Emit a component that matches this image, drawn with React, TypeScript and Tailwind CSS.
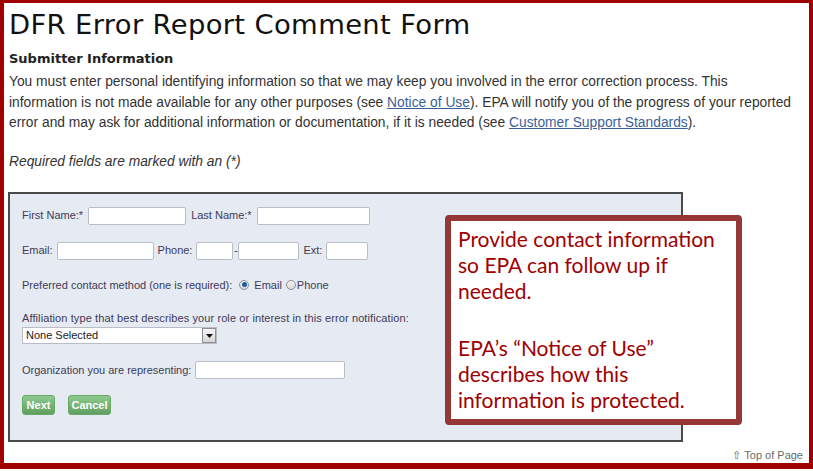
import React from "react";

const labelCls = "text-[11px] text-[#3d3b57]";
const inputCls = "h-[18px] bg-white border border-[#b9bdc6] rounded-[2px]";

const Field: React.FC<{ w: string }> = ({ w }) => (
  <div className={`${inputCls} ${w}`} />
);

const Radio: React.FC<{ checked?: boolean }> = ({ checked }) => (
  <span className="inline-flex w-[10px] h-[10px] rounded-full border border-[#8a8f99] bg-gradient-to-b from-[#f4f4f4] to-[#d8d8d8] items-center justify-center">
    {checked && <span className="w-[5px] h-[5px] rounded-full bg-[#1e5f9e]" />}
  </span>
);

const GreenButton: React.FC<{ label: string; w: string }> = ({ label, w }) => (
  <div
    className={`${w} h-[20px] rounded-[3px] bg-gradient-to-b from-[#8fca8f] to-[#5f9f5f] border border-[#6aa86a] flex items-center justify-center text-white text-[11px] font-bold`}
  >
    {label}
  </div>
);

const App: React.FC = () => {
  return (
    <div className="w-[813px] h-[471px] bg-white overflow-hidden relative font-['DejaVu_Sans',sans-serif]">
      <div className="w-[813px] h-[469px] border-t-[3px] border-l-4 border-r-4 border-b-[6px] border-[#a10000] flex flex-col pl-[5px]">
        <h1 className="text-[27.4px] leading-[32px] text-[#111] mt-[6px] tracking-[0.35px]">
          DFR Error Report Comment Form
        </h1>
        <h2 className="text-[13px] font-bold text-[#222] mt-[9px] leading-[18px]">
          Submitter Information
        </h2>
        <p className="text-[13.8px] leading-[20.5px] text-[#333] mt-[4px] font-['Liberation_Sans',sans-serif]">
          You must enter personal identifying information so that we may keep you involved in the error correction process. This
          <br />
          information is not made available for any other purposes (see{" "}
          <span className="text-[#3b5f9a] underline">Notice of Use</span>). EPA will notify you of the progress of your reported
          <br />
          error and may ask for additional information or documentation, if it is needed (see{" "}
          <span className="text-[#3b5f9a] underline">Customer Support Standards</span>).
        </p>
        <p className="text-[13.8px] italic text-[#333] mt-[18px] leading-[20px] font-['Liberation_Sans',sans-serif]">
          Required fields are marked with an (*)
        </p>
        <div className="ml-[-1px] mt-[20px] w-[675px] h-[251px] border-2 border-[#4a4a4a] bg-[#e6eaf2] pl-[12px] pt-[13px] flex flex-col font-['Liberation_Sans',sans-serif]">
          <div className="flex items-center gap-[5px]">
            <span className={labelCls}>First Name:*</span>
            <Field w="w-[98px]" />
            <span className={labelCls}>Last Name:*</span>
            <Field w="w-[113px]" />
          </div>
          <div className="flex items-center gap-[4px] mt-[17px]">
            <span className={labelCls}>Email:</span>
            <Field w="w-[97px]" />
            <span className={labelCls}>Phone:</span>
            <div className="flex items-center">
              <Field w="w-[37px]" />
              <span className={`${labelCls} w-[5px] text-center`}>-</span>
              <Field w="w-[61px]" />
            </div>
            <span className={labelCls}>Ext:</span>
            <Field w="w-[42px]" />
          </div>
          <div className="flex items-center gap-[4px] mt-[17px]">
            <span className={`${labelCls} mr-[3px]`}>Preferred contact method (one is required):</span>
            <Radio checked />
            <span className={`${labelCls} ml-[1px]`}>Email</span>
            <Radio />
            <span className={`${labelCls} -ml-[3px]`}>Phone</span>
          </div>
          <div className={`${labelCls} mt-[18px] leading-[14px] tracking-[0.1px]`}>
            Affiliation type that best describes your role or interest in this error notification:
          </div>
          <div className="mt-[2px] w-[195px] h-[17px] bg-white border border-[#b9bdc6] flex items-center justify-between">
            <span className="text-[11px] text-[#222] pl-[3px]">None Selected</span>
            <div className="w-[14px] h-[15px] border border-[#8a8f99] bg-gradient-to-b from-[#f6f6f6] to-[#d6d6d6] flex items-center justify-center">
              <svg width="7" height="4" viewBox="0 0 7 4">
                <path d="M0 0 L7 0 L3.5 4 Z" fill="#111" />
              </svg>
            </div>
          </div>
          <div className="flex items-center gap-[4px] mt-[17px]">
            <span className={labelCls}>Organization you are representing:</span>
            <Field w="w-[150px]" />
          </div>
          <div className="flex items-center gap-[13px] mt-[16px]">
            <GreenButton label="Next" w="w-[33px]" />
            <GreenButton label="Cancel" w="w-[43px]" />
          </div>
        </div>
        <div className="flex justify-end pr-[6px] mt-[5px]">
          <span className="text-[11px] text-[#6b6b6b] font-['Liberation_Sans',sans-serif]">⇧ Top of Page</span>
        </div>
      </div>
      <div className="absolute left-[445px] top-[215px] w-[297px] h-[210px] border-[6px] border-[#953735] rounded-[4px] bg-white pl-[7px] pt-[5px] text-[#a00000] text-[21px] leading-[26px] font-['Lato',sans-serif]">
        <p>
          Provide contact information
          <br />
          so EPA can follow up if
          <br />
          needed.
        </p>
        <p className="mt-[31px]">
          EPA’s “Notice of Use”
          <br />
          describes how this
          <br />
          information is protected.
        </p>
      </div>
    </div>
  );
};

export default App;
